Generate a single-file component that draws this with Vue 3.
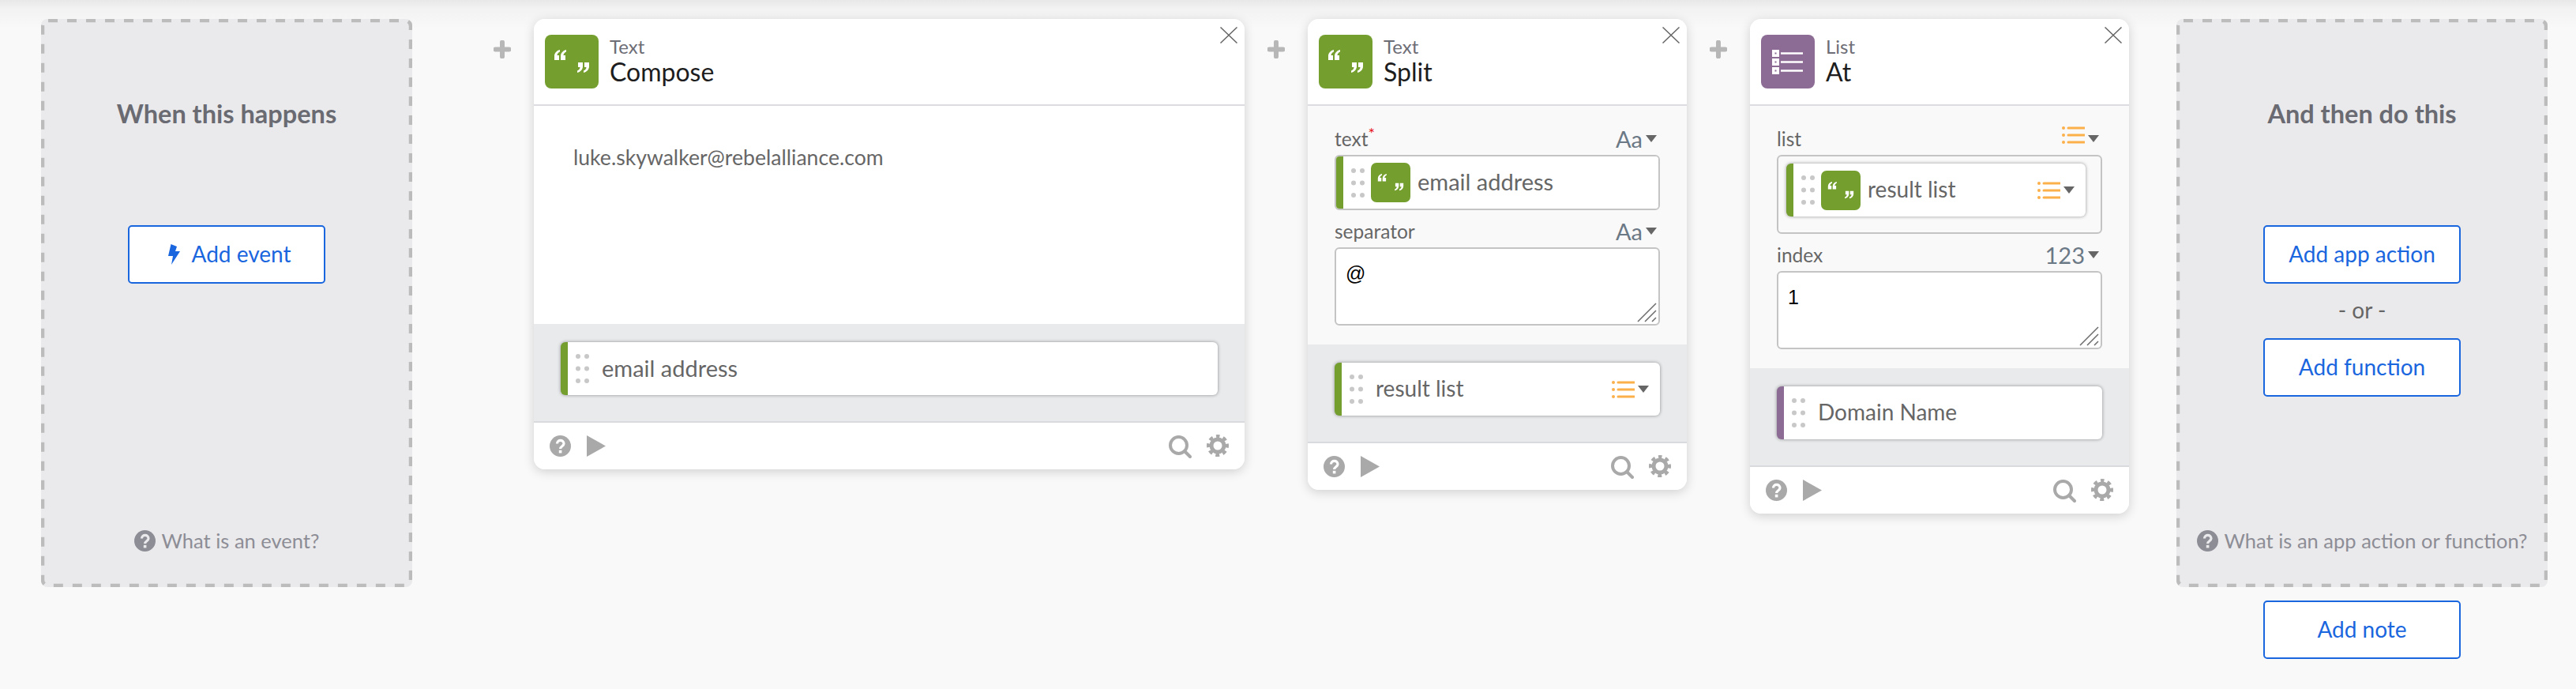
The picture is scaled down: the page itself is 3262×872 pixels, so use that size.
<script setup>
const list = [2, 11, 20];
const dots = [3, 18.5, 34];
</script>

<template>
  <div class="canvas">
    <svg class="sprite" width="0" height="0">
      <defs>
        <mask id="help-hole">
          <rect width="27" height="27" fill="#fff" />
          <path d="M9.5 10.5c0-5.5 8.5-5.5 8.5 0 0 3.2-4.4 3.2-4.4 6.5" fill="none" stroke="#000" stroke-width="3.2" />
          <rect x="11.8" y="18.8" width="3.6" height="3.6" fill="#000" />
        </mask>
      </defs>
      <symbol id="help" viewBox="0 0 27 27">
        <circle cx="13.5" cy="13.5" r="13.5" fill="currentColor" mask="url(#help-hole)" />
      </symbol>
      <symbol id="quotes" viewBox="0 0 68 68">
        <g fill="#fff">
          <path d="M19 19c-4 1-7 4-7 8v5h6v-6h-2.500c0-2 1.500-3.500 3.500-4.500z" />
          <path d="M27 19c-4 1-7 4-7 8v5h6v-6h-2.500c0-2 1.500-3.500 3.500-4.500z" />
          <path d="M49 48c4-1 7-4 7-8v-5h-6v6h2.500c0 2-1.500 3.500-3.500 4.500z" />
          <path d="M41 48c4-1 7-4 7-8v-5h-6v6h2.500c0 2-1.500 3.500-3.500 4.500z" />
        </g>
      </symbol>
      <symbol id="drag" viewBox="0 0 17 37">
        <g v-for="y in dots" :key="y" fill="#c8c8c8">
          <circle cx="3" :cy="y" r="3" />
          <circle cx="14" :cy="y" r="3" />
        </g>
      </symbol>
      <symbol id="orange-list" viewBox="0 0 29 22">
        <g v-for="y in list" :key="y">
          <circle cx="2" :cy="y" r="2" fill="#fbb04a" />
          <path :d="`M8 ${y}H29`" stroke="#fbb04a" stroke-width="3" stroke-linecap="round" />
        </g>
      </symbol>
      <symbol id="footer-search" viewBox="0 0 29 29">
        <circle cx="12.500" cy="12.500" r="10.500" fill="none" stroke="currentColor" stroke-width="4" />
        <path d="M20 20l7 7" stroke="currentColor" stroke-width="4" stroke-linecap="round" />
      </symbol>
      <symbol id="footer-gear" viewBox="0 0 28 28">
        <circle cx="14" cy="14" r="8" fill="none" stroke="currentColor" stroke-width="5" />
        <circle cx="14" cy="14" r="12" fill="none" stroke="currentColor" stroke-width="4" stroke-dasharray="5 4.425" stroke-dashoffset="2.500" transform="rotate(-90 14 14)" />
      </symbol>
      <symbol id="grip" viewBox="0 0 25 25">
        <path d="M1 24L24 1M10 24L24 10M19 24L24 19" stroke="#6b6b6b" stroke-width="1.500" fill="none" />
      </symbol>
    </svg>

    <div class="top-shade"></div>

    <!-- trigger -->
    <section class="panel">
      <svg class="dashes"><rect x="2" y="2" rx="7" /></svg>
      <h2 class="panel-title">When this happens</h2>
      <button class="btn first-btn event-btn">
        <svg class="bolt" viewBox="0 0 15 26"><path d="M3.500 0L0 15h6L4 26 15 9H9l2-6z" fill="currentColor" /></svg>
        Add event
      </button>
      <div class="panel-help">
        <svg class="help-icon panel-help-icon"><use href="#help" /></svg>
        What is an event?
      </div>
    </section>

    <svg class="plus plus-first" viewBox="0 0 22 23"><path d="M11 2.500v18M2.500 11.500h17" stroke="#b7b7b7" stroke-width="6" stroke-linecap="round" /></svg>

    <!-- Text / Compose -->
    <article class="card card-wide">
      <header class="card-head">
        <svg class="app-icon green"><use href="#quotes" /></svg>
        <div>
          <div class="card-type">Text</div>
          <div class="card-name">Compose</div>
        </div>
        <svg class="close" viewBox="0 0 22 21"><path d="M.5.5l21 20M21.500.5l-21 20" stroke="#666" stroke-width="1.500" /></svg>
      </header>
      <div class="compose-body">luke.skywalker@rebelalliance.com</div>
      <div class="outputs">
        <div class="pill green-edge">
          <svg class="drag"><use href="#drag" /></svg>
          <span class="pill-text wide-text">email address</span>
        </div>
      </div>
      <footer class="card-foot">
        <svg class="help-icon"><use href="#help" /></svg>
        <svg class="play" viewBox="0 0 24 27"><path d="M0 0l24 13.500L0 27z" fill="currentColor" /></svg>
        <span class="spring"></span>
        <svg class="search"><use href="#footer-search" /></svg>
        <svg class="gear"><use href="#footer-gear" /></svg>
      </footer>
    </article>

    <svg class="plus" viewBox="0 0 22 23"><path d="M11 2.500v18M2.500 11.500h17" stroke="#b7b7b7" stroke-width="6" stroke-linecap="round" /></svg>

    <!-- Text / Split -->
    <article class="card">
      <header class="card-head">
        <svg class="app-icon green"><use href="#quotes" /></svg>
        <div>
          <div class="card-type">Text</div>
          <div class="card-name">Split</div>
        </div>
        <svg class="close" viewBox="0 0 22 21"><path d="M.5.5l21 20M21.500.5l-21 20" stroke="#666" stroke-width="1.500" /></svg>
      </header>
      <div class="inputs">
        <div class="label-row">
          <span>text<sup class="req">*</sup></span>
          <span class="kind">Aa<i class="caret"></i></span>
        </div>
        <div class="field field-pill">
          <div class="pill-flat green-edge">
            <svg class="drag"><use href="#drag" /></svg>
            <svg class="mini-icon green"><use href="#quotes" /></svg>
            <span class="pill-text wide-text">email address</span>
          </div>
        </div>
        <div class="label-row next">
          <span>separator</span>
          <span class="kind">Aa<i class="caret"></i></span>
        </div>
        <div class="field field-text">
          @
          <svg class="grip"><use href="#grip" /></svg>
        </div>
      </div>
      <div class="outputs">
        <div class="pill green-edge">
          <svg class="drag"><use href="#drag" /></svg>
          <span class="pill-text">result list</span>
          <svg class="list-icon push"><use href="#orange-list" /></svg>
          <i class="caret"></i>
        </div>
      </div>
      <footer class="card-foot">
        <svg class="help-icon"><use href="#help" /></svg>
        <svg class="play" viewBox="0 0 24 27"><path d="M0 0l24 13.500L0 27z" fill="currentColor" /></svg>
        <span class="spring"></span>
        <svg class="search"><use href="#footer-search" /></svg>
        <svg class="gear"><use href="#footer-gear" /></svg>
      </footer>
    </article>

    <svg class="plus" viewBox="0 0 22 23"><path d="M11 2.500v18M2.500 11.500h17" stroke="#b7b7b7" stroke-width="6" stroke-linecap="round" /></svg>

    <!-- List / At -->
    <article class="card">
      <header class="card-head">
        <svg class="app-icon purple" viewBox="0 0 68 68">
          <g v-for="y in [19, 30, 41]" :key="y">
            <rect x="14" :y="y" width="9" height="9" fill="#fff" />
            <rect x="17.500" :y="y + 3.5" width="2" height="2" fill="#8c6b94" />
            <path :d="`M25 ${y + 4.5}H53`" stroke="#fff" stroke-width="2.500" />
          </g>
        </svg>
        <div>
          <div class="card-type">List</div>
          <div class="card-name">At</div>
        </div>
        <svg class="close" viewBox="0 0 22 21"><path d="M.5.5l21 20M21.500.5l-21 20" stroke="#666" stroke-width="1.500" /></svg>
      </header>
      <div class="inputs">
        <div class="label-row">
          <span>list</span>
          <span class="kind"><svg class="list-icon raised"><use href="#orange-list" /></svg><i class="caret"></i></span>
        </div>
        <div class="field field-nested">
          <div class="pill green-edge">
            <svg class="drag"><use href="#drag" /></svg>
            <svg class="mini-icon green"><use href="#quotes" /></svg>
            <span class="pill-text">result list</span>
            <svg class="list-icon push"><use href="#orange-list" /></svg>
            <i class="caret"></i>
          </div>
        </div>
        <div class="label-row next">
          <span>index</span>
          <span class="kind">123<i class="caret"></i></span>
        </div>
        <div class="field field-text">
          1
          <svg class="grip"><use href="#grip" /></svg>
        </div>
      </div>
      <div class="outputs">
        <div class="pill purple-edge">
          <svg class="drag"><use href="#drag" /></svg>
          <span class="pill-text">Domain Name</span>
        </div>
      </div>
      <footer class="card-foot">
        <svg class="help-icon"><use href="#help" /></svg>
        <svg class="play" viewBox="0 0 24 27"><path d="M0 0l24 13.500L0 27z" fill="currentColor" /></svg>
        <span class="spring"></span>
        <svg class="search"><use href="#footer-search" /></svg>
        <svg class="gear"><use href="#footer-gear" /></svg>
      </footer>
    </article>

    <!-- next step -->
    <div class="last-col">
      <section class="panel">
        <svg class="dashes"><rect x="2" y="2" rx="7" /></svg>
        <h2 class="panel-title">And then do this</h2>
        <button class="btn first-btn">Add app action</button>
        <div class="or">- or -</div>
        <button class="btn">Add function</button>
        <div class="panel-help">
          <svg class="help-icon panel-help-icon"><use href="#help" /></svg>
          What is an app action or function?
        </div>
      </section>
      <button class="btn note">Add note</button>
    </div>
  </div>
</template>

<style scoped>
.canvas {
  position: relative;
  display: flex;
  align-items: flex-start;
  box-sizing: border-box;
  width: 3262px;
  height: 872px;
  padding: 24px 0 0 52px;
  background: #f9f9f9;
  font-family: Lato, "Liberation Sans", sans-serif;
  overflow: hidden;
}

.sprite {
  position: absolute;
}

.top-shade {
  position: absolute;
  top: 0;
  left: 0;
  right: 0;
  height: 36px;
  background: linear-gradient(#e8e8e8, #f2f2f2 30%, #f9f9f9);
}

.panel {
  position: relative;
  display: flex;
  flex-direction: column;
  align-items: center;
  box-sizing: border-box;
  flex: none;
  width: 470px;
  height: 719px;
  padding: 100px 0 45px;
  background: #eaeaec;
  border-radius: 8px;
}

.dashes {
  position: absolute;
  top: 0;
  left: 0;
  width: 100%;
  height: 100%;
}

.dashes rect {
  width: calc(100% - 4px);
  height: calc(100% - 4px);
  fill: none;
  stroke: #bcbcbc;
  stroke-width: 4.5;
  stroke-dasharray: 12 12;
}

.panel-title {
  margin: 0;
  font-size: 32.5px;
  line-height: 40px;
  font-weight: 700;
  color: #6a6a72;
}

.btn {
  display: flex;
  align-items: center;
  justify-content: center;
  box-sizing: border-box;
  flex: none;
  width: 250px;
  height: 74px;
  padding: 0 0 3px;
  background: #fff;
  border: 2.5px solid #1a66de;
  border-radius: 5px;
  color: #1a66de;
  font-family: inherit;
  font-size: 28px;
}

.first-btn {
  position: relative;
  margin-top: 121px;
}

.event-btn {
  padding-left: 7px;
}

.bolt {
  width: 15px;
  height: 26px;
  margin: 3px 15px 0 0;
}

.or {
  height: 69px;
  padding-bottom: 2px;
  box-sizing: border-box;
  line-height: 67px;
  font-size: 28px;
  color: #666;
}

.panel-help {
  display: flex;
  align-items: center;
  margin-top: auto;
  font-size: 25.5px;
  line-height: 28px;
  color: #8d8d96;
}

.panel-help-icon {
  margin-right: 8px;
  color: #8d8d96;
}

.last-col {
  display: flex;
  flex-direction: column;
  align-items: center;
  flex: none;
  margin-left: 60px;
}

.note {
  margin-top: 17px;
}

.plus {
  position: relative;
  flex: none;
  width: 22px;
  height: 23px;
  margin: 27px 29px 0;
}

.plus-first {
  margin-left: 103px;
}

.card {
  position: relative;
  flex: none;
  width: 480px;
  background: #f9f9f9;
  border-radius: 14px;
  box-shadow: 0 3px 14px rgba(0, 0, 0, 0.17);
}

.card-wide {
  width: 900px;
}

.card-head {
  position: relative;
  display: flex;
  align-items: flex-start;
  gap: 14px;
  box-sizing: border-box;
  height: 110px;
  padding: 20px 14px 0;
  background: #fff;
  border-bottom: 2px solid #dcdce1;
  border-radius: 14px 14px 0 0;
}

.app-icon {
  flex: none;
  width: 68px;
  height: 68px;
  border-radius: 8px;
}

.green {
  background: #749f2f;
}

.purple {
  background: #8c6b94;
}

.card-type {
  margin-top: 1px;
  font-size: 24px;
  line-height: 28px;
  color: #6d6d76;
}

.card-name {
  font-size: 32px;
  line-height: 36px;
  color: #1d1d20;
}

.close {
  position: absolute;
  top: 10px;
  right: 9px;
  width: 22px;
  height: 21px;
}

.compose-body {
  box-sizing: border-box;
  height: 276px;
  padding: 48px 50px 0;
  background: #fff;
  font-size: 26.6px;
  line-height: 34px;
  color: #666;
}

.inputs {
  padding: 26px 34px 24px;
}

.label-row {
  display: flex;
  justify-content: space-between;
  align-items: center;
  height: 30px;
  margin-bottom: 6px;
  padding-right: 4px;
  font-size: 24.5px;
  color: #666;
}

.label-row.next {
  margin-top: 11px;
}

.req {
  color: #e8141e;
  font-size: 20px;
  line-height: 0;
}

.kind {
  display: flex;
  align-items: center;
  font-size: 29px;
  color: #6b7885;
}

.caret {
  display: inline-block;
  width: 0;
  height: 0;
  margin-left: 4px;
  border-style: solid;
  border-width: 9px 7px 0;
  border-color: #666 transparent transparent;
}

.field {
  position: relative;
  box-sizing: border-box;
  background: #fff;
  border: 2px solid #c4c4c4;
  border-radius: 6px;
}

.field-pill {
  height: 70px;
  overflow: hidden;
}

.field-text {
  height: 99px;
  padding: 15px 12px;
  font-family: "Liberation Sans", Arial, sans-serif;
  font-size: 25px;
  line-height: 32px;
  color: #000;
}

.field-nested {
  height: 100px;
  padding: 9px 19px 0 10px;
  background: transparent;
}

.grip {
  position: absolute;
  right: 2px;
  bottom: 2px;
  width: 25px;
  height: 25px;
}

.outputs {
  box-sizing: border-box;
  height: 125px;
  padding: 23px 34px 0;
  background: #e9eaec;
  border-bottom: 2px solid #d9dade;
}

.pill,
.pill-flat {
  display: flex;
  align-items: center;
  box-sizing: border-box;
  background: #fff;
  padding-right: 14px;
}

.pill {
  height: 67px;
  border-radius: 6px;
  box-shadow: 0 0 4px rgba(0, 0, 0, 0.4);
}

.pill-flat {
  height: 100%;
}

.green-edge {
  border-left: 9px solid #749f2f;
}

.purple-edge {
  border-left: 9px solid #8c6b94;
}

.drag {
  flex: none;
  width: 17px;
  height: 37px;
  margin: 0 16px 0 10px;
}

.mini-icon {
  flex: none;
  width: 50px;
  height: 50px;
  margin: 0 9px 0 -8px;
  border-radius: 7px;
}

.pill-text {
  padding-bottom: 3px;
  font-size: 28px;
  color: #666;
}

.wide-text {
  font-size: 29px;
}

.list-icon {
  flex: none;
  width: 29px;
  height: 22px;
}

.push {
  margin-left: auto;
}

.raised {
  margin-top: -8px;
}

.card-foot {
  display: flex;
  align-items: center;
  box-sizing: border-box;
  height: 59px;
  padding: 0 20px;
  background: #fff;
  border-radius: 0 0 14px 14px;
  color: #a9a9a9;
}

.help-icon {
  flex: none;
  width: 27px;
  height: 27px;
}

.play {
  width: 24px;
  height: 27px;
  margin-left: 20px;
}

.spring {
  flex: 1;
}

.search {
  width: 29px;
  height: 29px;
  margin-top: 2px;
}

.gear {
  width: 28px;
  height: 28px;
  margin: -2px 0 0 19px;
}
</style>

<style>
html,
body {
  background: #f9f9f9;
}
</style>
